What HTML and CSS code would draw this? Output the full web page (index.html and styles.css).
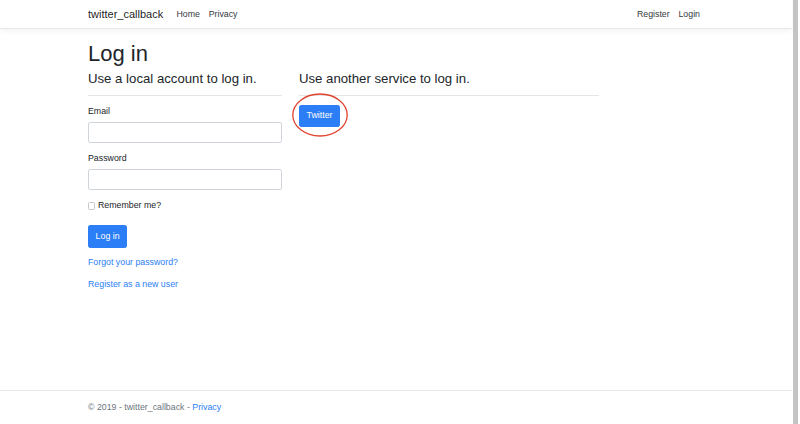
FILE: index.html
```html
<!DOCTYPE html>
<html lang="en">
<head>
<meta charset="utf-8">
<title>Log in - twitter_callback</title>
<link rel="stylesheet" href="styles.css">
</head>
<body>
<div class="screen">
  <div class="page">
    <header class="navbar">
      <div class="container nav-inner">
        <a class="brand" href="#">twitter_callback</a>
        <ul class="nav nav-left">
          <li><a class="nav-link" href="#">Home</a></li>
          <li><a class="nav-link" href="#">Privacy</a></li>
        </ul>
        <ul class="nav nav-right">
          <li><a class="nav-link" href="#">Register</a></li>
          <li><a class="nav-link" href="#">Login</a></li>
        </ul>
      </div>
    </header>

    <main class="container main">
      <h1 class="title">Log in</h1>
      <div class="row">
        <section class="col-left">
          <h4 class="subtitle">Use a local account to log in.</h4>
          <hr class="rule">
          <form class="login-form">
            <div class="form-group">
              <label class="field-label" for="email">Email</label>
              <input class="field" id="email" type="email">
            </div>
            <div class="form-group">
              <label class="field-label" for="password">Password</label>
              <input class="field" id="password" type="password">
            </div>
            <div class="form-group check-group">
              <label class="check-label"><input class="check" type="checkbox">Remember me?</label>
            </div>
            <div class="form-group">
              <button class="btn" type="button">Log in</button>
            </div>
            <p class="link-line"><a class="link" href="#">Forgot your password?</a></p>
            <p class="link-line"><a class="link" href="#">Register as a new user</a></p>
          </form>
        </section>
        <section class="col-right">
          <h4 class="subtitle">Use another service to log in.</h4>
          <hr class="rule">
          <p class="ext-line">
            <span class="btn-wrap">
              <button class="btn" type="button">Twitter</button>
              <svg class="annot" viewBox="0 0 56 44" width="56" height="44" aria-hidden="true">
                <ellipse cx="28" cy="22" rx="27.2" ry="21" fill="none" stroke="#e0442f" stroke-width="1.3"/>
              </svg>
            </span>
          </p>
        </section>
      </div>
    </main>

    <footer class="footer">
      <div class="container">© 2019 - twitter_callback - <a class="link" href="#">Privacy</a></div>
    </footer>
  </div>
  <div class="scrollbar"><div class="thumb"></div></div>
</div>
</body>
</html>
```

FILE: styles.css
```css
* { box-sizing: border-box; }

html, body {
  margin: 0;
  padding: 0;
  background: #fff;
}

body {
  font-family: "Liberation Sans", Arial, sans-serif;
  font-size: 8.8px;
  line-height: 1.5;
  color: #212529;
}

.screen {
  display: flex;
  width: 800px;
  height: 424px;
  overflow: hidden;
}

.page {
  width: 792px;
  height: 424px;
  display: flex;
  flex-direction: column;
}

.scrollbar {
  width: 8px;
  padding-left: 1px;
  padding-right: 2px;
}

.thumb {
  height: 100%;
  background: #c4c4c4;
}

.container {
  width: 616px;
  margin: 0 auto;
}

/* navbar */
.navbar {
  height: 29px;
  border-bottom: 1px solid #e6e6e6;
  box-shadow: 0 2px 6px rgba(0, 0, 0, 0.05);
  margin-bottom: 11.5px;
  flex: none;
}

.nav-inner {
  height: 28px;
  display: flex;
  align-items: center;
}

.brand {
  font-size: 11px;
  line-height: 16.5px;
  color: rgba(0, 0, 0, 0.9);
  text-decoration: none;
  margin-right: 8.8px;
  padding-top: 1px;
}

.nav {
  list-style: none;
  margin: 0;
  padding: 0;
  display: flex;
}

.nav-right {
  margin-left: auto;
}

.nav-link {
  display: block;
  padding: 0 4.4px;
  color: #343a40;
  text-decoration: none;
  line-height: 13.2px;
  padding-top: 1px;
}

.nav-right li:last-child .nav-link {
  padding-right: 4px;
}

/* main */
.main {
  flex: 1;
}

.title {
  font-size: 22px;
  line-height: 26.4px;
  font-weight: 500;
  margin: 0 0 4px;
}

.row {
  display: grid;
  grid-template-columns: 194px 300px;
  column-gap: 17px;
}

.subtitle {
  font-size: 13.2px;
  line-height: 15.8px;
  font-weight: 500;
  margin: 0 0 4.4px;
}

.rule {
  border: 0;
  border-top: 1px solid rgba(0, 0, 0, 0.1);
  margin: 8.4px 0 8.8px;
}

.login-form {
  margin: 0;
}

.form-group {
  margin-bottom: 8.8px;
}

.check-group {
  padding-bottom: 4.4px;
}

.field-label {
  display: block;
  margin-bottom: 4px;
  line-height: 13.2px;
}

.field {
  display: block;
  width: 100%;
  height: 21px;
  border: 1px solid #ced4da;
  border-radius: 2.2px;
  background: #fff;
  padding: 0 6.6px;
  font: inherit;
}

.check-label {
  display: flex;
  align-items: center;
  height: 13.2px;
}

.check {
  appearance: none;
  -webkit-appearance: none;
  width: 7.4px;
  height: 7.4px;
  margin: 1px 2.6px 0 0;
  border: 1px solid #c8c8c8;
  border-radius: 1.6px;
  background: #fff;
}

.btn {
  display: inline-block;
  font: inherit;
  line-height: 13.2px;
  padding: 3.6px 6.6px;
  color: #fff;
  background: #2b7ef5;
  border: 1px solid #2b7ef5;
  border-radius: 2.2px;
  cursor: pointer;
}

.link-line {
  margin: 0 0 8.8px;
  line-height: 13.2px;
}

.link {
  color: #2b7ef5;
  text-decoration: none;
}

.ext-line {
  margin: 0;
}

.btn-wrap {
  position: relative;
  display: inline-block;
}

.annot {
  position: absolute;
  left: -7px;
  top: -11.5px;
  pointer-events: none;
}

/* footer */
.footer {
  flex: none;
  height: 34px;
  border-top: 1px solid #e6e6e6;
  line-height: 33px;
  color: #6c757d;
}
```
